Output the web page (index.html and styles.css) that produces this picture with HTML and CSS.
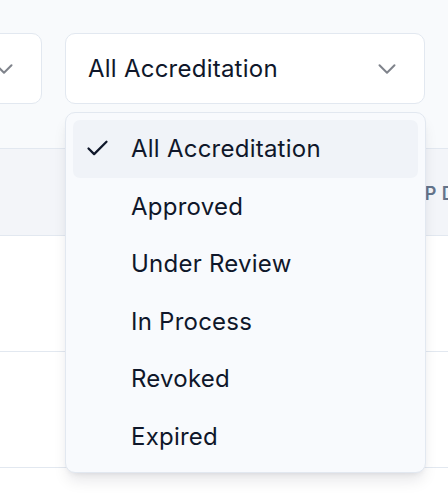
FILE: index.html
```html
<!DOCTYPE html>
<html lang="en">
<head>
<meta charset="utf-8">
<title>Accreditation filter</title>
<link rel="stylesheet" href="styles.css">
</head>
<body>
<div class="page">
  <div class="toolbar">
    <div class="filters">
      <button class="select select-side">
        <span class="select-label">All Types</span>
        <svg class="chev" viewBox="0 0 24 24" fill="none" stroke="currentColor" stroke-width="1.6" stroke-linecap="round" stroke-linejoin="round"><path d="m6 9 6 6 6-6"/></svg>
      </button>
      <div class="select-wrap">
        <button class="select select-main">
          <span class="select-label">All Accreditation</span>
          <svg class="chev" viewBox="0 0 24 24" fill="none" stroke="currentColor" stroke-width="1.6" stroke-linecap="round" stroke-linejoin="round"><path d="m6 9 6 6 6-6"/></svg>
        </button>
        <div class="menu">
          <div class="item item-active">
            <span class="item-icon"><svg viewBox="0 0 24 24" fill="none" stroke="currentColor" stroke-width="2" stroke-linecap="round" stroke-linejoin="round"><path d="M20 6 9 17l-5-5"/></svg></span>
            <span>All Accreditation</span>
          </div>
          <div class="item"><span class="item-icon"></span><span>Approved</span></div>
          <div class="item"><span class="item-icon"></span><span>Under Review</span></div>
          <div class="item"><span class="item-icon"></span><span>In Process</span></div>
          <div class="item"><span class="item-icon"></span><span>Revoked</span></div>
          <div class="item"><span class="item-icon"></span><span>Expired</span></div>
        </div>
      </div>
      <button class="select select-side select-empty"></button>
    </div>
  </div>
  <div class="table">
    <div class="thead">
      <span class="th">GMP DATE</span>
    </div>
    <div class="row"></div>
    <div class="row"></div>
  </div>
</div>
</body>
</html>
```

FILE: styles.css
```css
* { box-sizing: border-box; }
html, body { margin: 0; padding: 0; }
body {
  background: #ffffff;
  font-family: Inter, "Noto Sans", sans-serif;
  color: #0f172a;
  overflow: hidden;
  width: 448px;
  height: 504px;
}
.page { width: 448px; }
.toolbar {
  background: #f8fafc;
  height: 148px;
  padding-top: 33px;
}
.filters {
  display: flex;
  gap: 23px;
  margin-left: -158px;
  position: relative;
  z-index: 2;
}
.select {
  height: 71px;
  border: 1px solid #e2e8f0;
  border-radius: 10px;
  background: #ffffff;
  display: flex;
  align-items: center;
  justify-content: space-between;
  padding: 0 22px 0 22px;
  font-family: inherit;
  font-size: 24px;
  color: #0f172a;
  flex: none;
}
.select-side { width: 200px; }
.select-main { width: 360px; }
.select-label { white-space: nowrap; letter-spacing: 0.01em; }
.chev {
  width: 30px;
  height: 30px;
  color: #7f838b;
  flex: none;
}
.select-wrap { position: relative; flex: none; }
.menu {
  position: absolute;
  top: 79px;
  left: 0;
  width: 361px;
  background: #f8fafd;
  border: 1px solid #e2e8f0;
  border-radius: 10px;
  padding: 7px;
  box-shadow: 0 10px 15px -3px rgba(15, 23, 42, 0.10), 0 4px 6px -4px rgba(15, 23, 42, 0.10);
}
.item {
  height: 57.5px;
  display: flex;
  align-items: center;
  gap: 20px;
  padding-left: 11px;
  border-radius: 7px;
  font-size: 24px;
  letter-spacing: 0.01em;
  color: #0f172a;
  white-space: nowrap;
}
.item-active { background: #f0f3f8; }
.item-icon {
  width: 27px;
  height: 27px;
  flex: none;
  display: flex;
}
.item-icon svg { width: 27px; height: 27px; color: #0f172a; }
.table { border-top: 1px solid #e2e8f0; }
.thead {
  height: 87px;
  background: #f3f5f9;
  border-bottom: 1px solid #e2e8f0;
  display: flex;
  align-items: center;
  padding-left: 394px;
  padding-top: 2px;
}
.th {
  font-size: 18px;
  font-weight: 600;
  letter-spacing: 0.02em;
  color: #64748b;
  white-space: nowrap;
}
.row {
  height: 116px;
  background: #ffffff;
  border-bottom: 1px solid #e2e8f0;
}
```
